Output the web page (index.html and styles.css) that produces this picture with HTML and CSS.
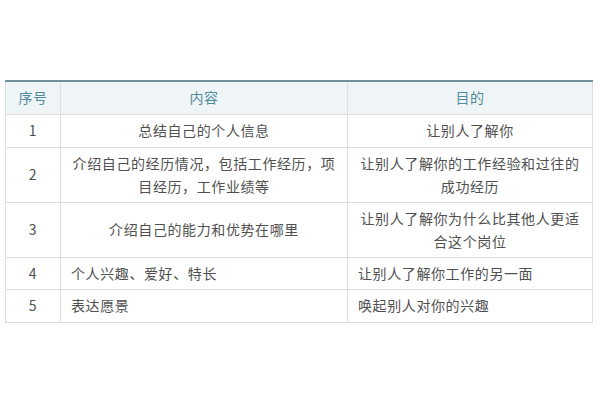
FILE: index.html
```html
<!DOCTYPE html>
<html lang="zh">
<head>
<meta charset="utf-8">
<link rel="stylesheet" href="styles.css">
</head>
<body>
<table class="plan">
  <colgroup>
    <col class="c-num"><col class="c-content"><col class="c-goal">
  </colgroup>
  <thead>
    <tr class="r-head"><th>序号</th><th>内容</th><th>目的</th></tr>
  </thead>
  <tbody>
    <tr class="r-m"><td class="num">1</td><td class="mid">总结自己的个人信息</td><td class="mid">让别人了解你</td></tr>
    <tr class="r-l"><td class="num">2</td><td class="mid">介绍自己的经历情况，包括工作经历，项<br>目经历，工作业绩等</td><td class="mid">让别人了解你的工作经验和过往的<br>成功经历</td></tr>
    <tr class="r-l"><td class="num">3</td><td class="mid">介绍自己的能力和优势在哪里</td><td class="mid">让别人了解你为什么比其他人更适<br>合这个岗位</td></tr>
    <tr class="r-s"><td class="num">4</td><td class="left">个人兴趣、爱好、特长</td><td class="left">让别人了解你工作的另一面</td></tr>
    <tr class="r-m"><td class="num">5</td><td class="left">表达愿景</td><td class="left">唤起别人对你的兴趣</td></tr>
  </tbody>
</table>
</body>
</html>
```
FILE: styles.css
```css
html, body {
  margin: 0;
  background: #ffffff;
}
body {
  padding: 80px 0 0 5px;
  font-family: "Noto Sans CJK SC", "Noto Sans", sans-serif;
}
.plan {
  border-collapse: collapse;
  width: 587px;
  table-layout: fixed;
  border-top: 2px solid #6f939c;
  font-size: 14px;
  letter-spacing: 0.6px;
  color: #505050;
}
.c-num { width: 55px; }
.c-content { width: 287px; }
.c-goal { width: 245px; }
.plan th,
.plan td {
  border: 1px solid #dedede;
  padding: 0 10px;
  line-height: 23px;
  vertical-align: middle;
}
.plan th {
  background: #eff4f6;
  color: #4f8c9c;
  font-weight: normal;
  text-align: center;
  height: 33px;
  box-sizing: border-box;
}
.plan tr.r-head th { border-top: none; }
.r-s td { height: 32px; box-sizing: border-box; }
.r-m td { height: 33px; box-sizing: border-box; }
.r-l td { height: 55px; box-sizing: border-box; }
.num { text-align: center; }
.mid { text-align: center; }
.left { text-align: left; }
```
